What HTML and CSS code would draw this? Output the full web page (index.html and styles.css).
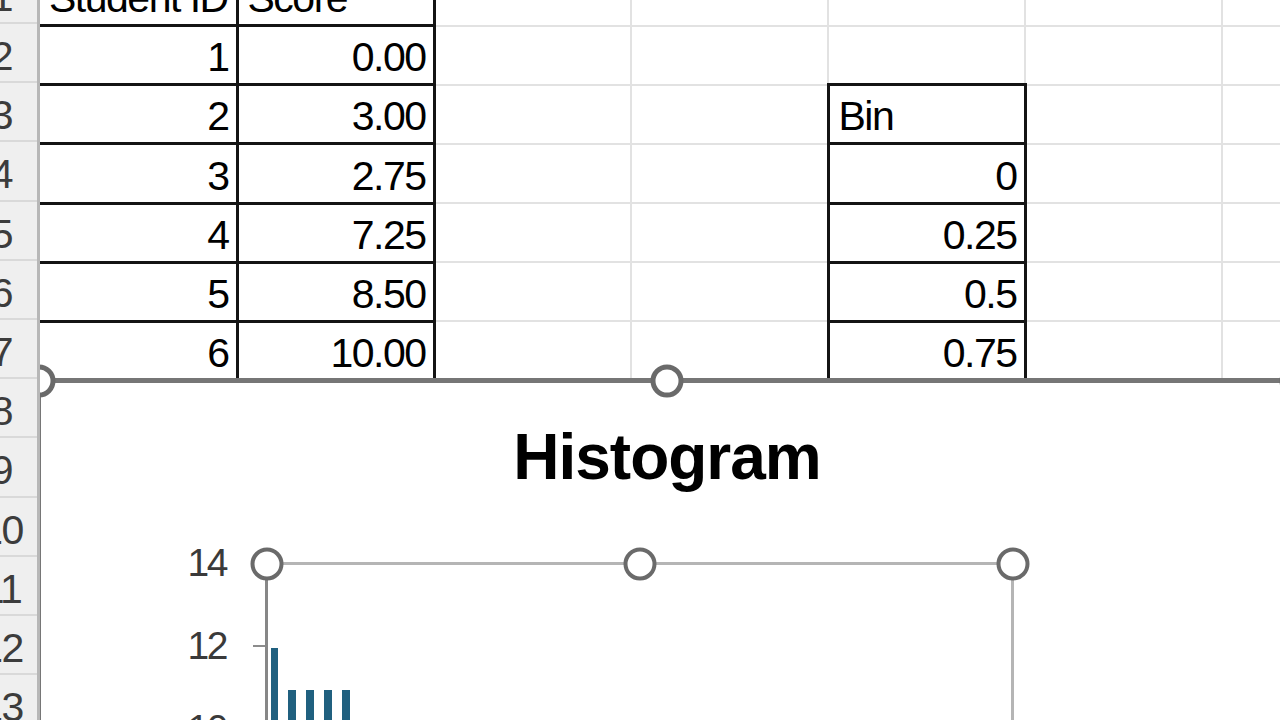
FILE: index.html
```html
<!DOCTYPE html>
<html>
<head>
	<meta charset="utf-8">
	<title>Histogram</title>
	<link rel="stylesheet" href="styles.css">
</head>
<body>
	<div class="sheet">
		<div class="rowhead">
			<div class="rh">1</div>
			<div class="rh">2</div>
			<div class="rh">3</div>
			<div class="rh">4</div>
			<div class="rh">5</div>
			<div class="rh">6</div>
			<div class="rh">7</div>
			<div class="rh">8</div>
			<div class="rh">9</div>
			<div class="rh">10</div>
			<div class="rh">11</div>
			<div class="rh">12</div>
			<div class="rh">13</div>
		</div>

		<table class="grid">
			<colgroup><col span="7" class="col"></colgroup>
			<tr><td class="b txt">Student ID</td><td class="b txt">Score</td><td></td><td></td><td></td><td></td><td></td></tr>
			<tr><td class="b">1</td><td class="b">0.00</td><td></td><td></td><td></td><td></td><td></td></tr>
			<tr><td class="b">2</td><td class="b">3.00</td><td></td><td></td><td class="b txt">Bin</td><td></td><td></td></tr>
			<tr><td class="b">3</td><td class="b">2.75</td><td></td><td></td><td class="b">0</td><td></td><td></td></tr>
			<tr><td class="b">4</td><td class="b">7.25</td><td></td><td></td><td class="b">0.25</td><td></td><td></td></tr>
			<tr><td class="b">5</td><td class="b">8.50</td><td></td><td></td><td class="b">0.5</td><td></td><td></td></tr>
			<tr><td class="b">6</td><td class="b">10.00</td><td></td><td></td><td class="b">0.75</td><td></td><td></td></tr>
			<tr><td></td><td></td><td></td><td></td><td></td><td></td><td></td></tr>
			<tr><td></td><td></td><td></td><td></td><td></td><td></td><td></td></tr>
			<tr><td></td><td></td><td></td><td></td><td></td><td></td><td></td></tr>
			<tr><td></td><td></td><td></td><td></td><td></td><td></td><td></td></tr>
			<tr><td></td><td></td><td></td><td></td><td></td><td></td><td></td></tr>
			<tr><td></td><td></td><td></td><td></td><td></td><td></td><td></td></tr>
		</table>

		<!-- chart object floats over the sheet -->
		<div class="chart">
			<span class="handle big h-left"></span>
			<span class="handle big h-mid"></span>
			<span class="handle big h-right"></span>

			<h2 class="chart-title">Histogram</h2>

			<div class="chart-body">
				<div class="yaxis">
					<span>14</span>
					<span>12</span>
					<span>10</span>
					<span>8</span>
					<span>6</span>
					<span>4</span>
					<span>2</span>
					<span>0</span>
				</div>
				<div class="plot">
					<span class="handle p-left"></span>
					<span class="handle p-mid"></span>
					<span class="handle p-right"></span>
					<div class="bars">
						<div class="bar" style="height: 498px"></div>
						<div class="bar" style="height: 456.5px"></div>
						<div class="bar" style="height: 456.5px"></div>
						<div class="bar" style="height: 456.5px"></div>
						<div class="bar" style="height: 456.5px"></div>
						<div class="bar" style="height: 415px"></div>
						<div class="bar" style="height: 373.5px"></div>
						<div class="bar" style="height: 415px"></div>
						<div class="bar" style="height: 332px"></div>
						<div class="bar" style="height: 373.5px"></div>
						<div class="bar" style="height: 290.5px"></div>
						<div class="bar" style="height: 332px"></div>
						<div class="bar" style="height: 249px"></div>
						<div class="bar" style="height: 290.5px"></div>
						<div class="bar" style="height: 207.5px"></div>
						<div class="bar" style="height: 249px"></div>
						<div class="bar" style="height: 166px"></div>
						<div class="bar" style="height: 207.5px"></div>
						<div class="bar" style="height: 124.5px"></div>
						<div class="bar" style="height: 166px"></div>
					</div>
				</div>
			</div>
		</div>
	</div>
</body>
</html>
```

FILE: styles.css
```css
body{
	margin: 0;
	overflow: hidden;
	background: #fff;
	font-family: "Liberation Sans", Arial, sans-serif;
	color: #000;
}
.sheet{
	position: relative;
	display: flex;
	align-items: flex-start;
	width: 1280px;
	height: 720px;
	overflow: hidden;
}

/* row numbers, the left part is scrolled off screen */
.rowhead{
	position: relative;
	z-index: 3;
	flex: none;
	width: 74px;
	margin: -35.2px 0 0 -34px;
	background: #efefef;
	border-right: 3px solid #b7b7b7;
	box-sizing: border-box;
}
.rh{
	height: 59.2px;
	box-sizing: border-box;
	border-bottom: 2px solid #d9d9d9;
	font-size: 41px;
	line-height: 64px;
	letter-spacing: -1.5px;
	text-align: center;
	color: #3c3c3c;
	overflow: hidden;
}

.grid{
	flex: none;
	border-collapse: collapse;
	table-layout: fixed;
	width: 1379px;
	margin-top: -35.2px;
}
.col{
	width: 197px;
}
.grid tr{
	height: 59.2px;
}
.grid td{
	border: 2px solid #e2e2e2;
	padding: 0 7px 5px 7px;
	font-size: 41px;
	line-height: 41px;
	letter-spacing: -1.5px;
	text-align: right;
	vertical-align: bottom;
	white-space: nowrap;
	overflow: hidden;
}
.grid td:first-child{
	border-left: 0 none;
}
.grid td.b{
	border: 3px solid #141414;
}
.grid td.b:first-child{
	border-left: 0 none;
}
.grid td.txt{
	text-align: left;
	padding-left: 9px;
}

/* chart */
.chart{
	position: absolute;
	z-index: 2;
	left: 36px;
	top: 378px;
	width: 1262px;
	height: 420px;
	box-sizing: border-box;
	border: 5px solid #767676;
	background: #fff;
}
.handle{
	position: absolute;
	z-index: 4;
	width: 33px;
	height: 33px;
	box-sizing: border-box;
	border: 4px solid #6a6a6a;
	border-radius: 50%;
	background: #fff;
	transform: translate(-50%, -50%);
}
.handle.big{
	border-width: 5px;
	top: -2.5px;
}
.h-left{ left: -2.5px; }
.h-mid{ left: 50%; }
.h-right{ left: calc(100% + 2.5px); }

.chart-title{
	margin: 0;
	padding-top: 42px;
	font-size: 64px;
	line-height: 64px;
	font-weight: bold;
	letter-spacing: -1px;
	text-align: center;
}
.chart-body{
	display: flex;
	align-items: flex-start;
	margin-top: 73px;
}
.yaxis{
	flex: none;
	width: 224px;
	margin-top: -41.5px;
}
.yaxis span{
	position: relative;
	display: block;
	height: 83px;
	line-height: 83px;
	padding-right: 39px;
	font-size: 39px;
	letter-spacing: -2.5px;
	text-align: right;
	color: #3a3a3a;
}
.yaxis span::after{
	content: "";
	position: absolute;
	right: 0;
	top: 41px;
	width: 12px;
	height: 2px;
	background: #8c8c8c;
}
.plot{
	position: relative;
	flex: none;
	width: 749px;
	height: 587px;
	box-sizing: border-box;
	border: 3px solid #b5b5b5;
	border-left-color: #878787;
}
.p-left{ left: -1.5px; top: -1.5px; }
.p-mid{ left: 50%; top: -1.5px; }
.p-right{ left: calc(100% + 1.5px); top: -1.5px; }

.bars{
	display: flex;
	align-items: flex-end;
	gap: 10px;
	height: 100%;
	padding-left: 2.7px;
}
.bar{
	flex: none;
	width: 7.8px;
	background: #20607f;
}
```
